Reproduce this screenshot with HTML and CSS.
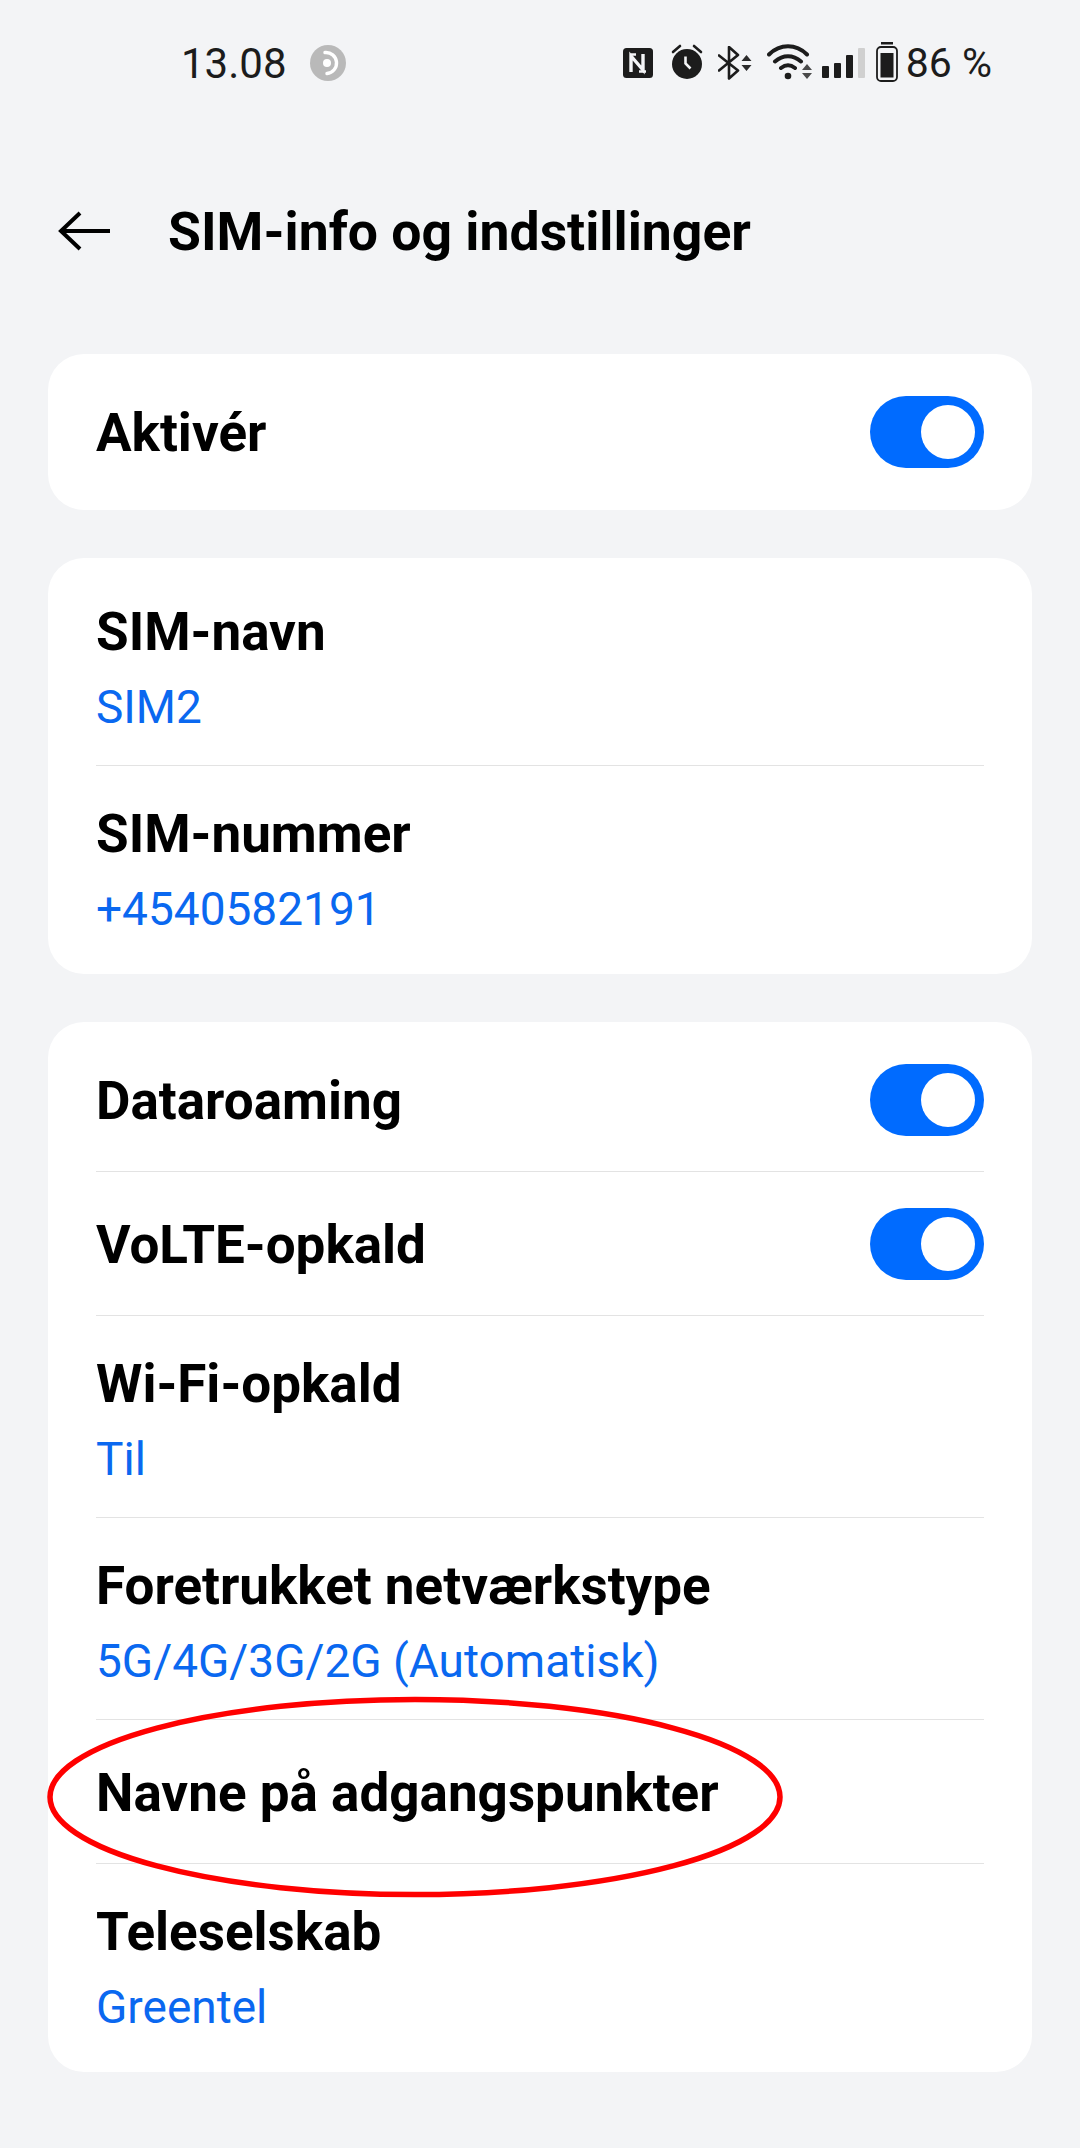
FILE: index.html
```html
<!DOCTYPE html>
<html lang="da">
<head>
    <meta charset="UTF-8">
    <meta name="viewport" content="width=device-width, initial-scale=1.0">
    <title>SIM-info og indstillinger</title>
    <link rel="stylesheet" href="styles.css">
</head>
<body>
    <div class="status-bar">
        <span class="clock">13.08</span>
        <svg class="icon-sync" width="36" height="36" viewBox="0 0 36 36">
            <circle cx="18" cy="18" r="18" fill="#b9b9b9"/>
            <circle cx="17" cy="18" r="4" fill="#fff"/>
            <path d="M15 7.5a10.5 10.5 0 0 1 2 21" fill="none" stroke="#fff" stroke-width="3.4" stroke-linecap="round"/>
        </svg>
        <div class="status-icons">
            <!-- NFC -->
            <svg class="icon-nfc" width="30" height="30" viewBox="0 0 30 30">
                <rect width="30" height="30" rx="3.5" fill="#1c1c1c"/>
                <path d="M8 24V8l12 14V6" fill="none" stroke="#f3f4f6" stroke-width="3.4"/>
                <path d="M8 6.500h5M16 23.500h7" fill="none" stroke="#f3f4f6" stroke-width="2.600"/>
            </svg>
            <!-- alarm -->
            <svg class="icon-alarm" width="32" height="36" viewBox="0 0 32 36">
                <circle cx="16" cy="21" r="15" fill="#1c1c1c"/>
                <path d="M2 9l7-6M30 9l-7-6" stroke="#1c1c1c" stroke-width="2.6" stroke-linecap="round"/>
                <path d="M14.5 13.5v7l5 5" fill="none" stroke="#f3f4f6" stroke-width="2.6"/>
            </svg>
            <!-- bluetooth -->
            <svg class="icon-bt" width="34" height="34" viewBox="0 0 34 34">
                <path d="M1 9.5l19 15-9 8V1l9 8L1 24.500" fill="none" stroke="#1c1c1c" stroke-width="2.6" stroke-linecap="round" stroke-linejoin="round"/>
                <path d="M23.500 15l5-6 5 6zM23.500 19h10l-5 6z" fill="#2b2b2b"/>
            </svg>
            <!-- wifi -->
            <svg class="icon-wifi" width="46" height="36" viewBox="0 0 46 36">
                <path d="M2 10.500c11-11 27-11 38 0M8 17.500c8-7 18-7 26 0M14 24c4.500-3.500 9.500-3.500 14 0" fill="none" stroke="#1c1c1c" stroke-width="4" stroke-linecap="round"/>
                <circle cx="21" cy="32" r="3.300" fill="#1c1c1c"/>
                <path d="M35 26l5-6 5 6zM35 29h10l-5 6z" fill="#4a4a4a"/>
            </svg>
            <!-- signal -->
            <div class="signal">
                <span class="bar bar-1"></span>
                <span class="bar bar-2"></span>
                <span class="bar bar-3"></span>
                <span class="bar bar-4"></span>
            </div>
            <!-- battery -->
            <svg class="icon-battery" width="22" height="40" viewBox="0 0 22 40">
                <rect x="5" y="0" width="12" height="2.500" fill="#1c1c1c"/>
                <rect x="1" y="5" width="20" height="34" rx="4" fill="none" stroke="#1c1c1c" stroke-width="1.800"/>
                <rect x="4.500" y="11" width="13" height="24.500" fill="#1c1c1c"/>
            </svg>
            <span class="battery-text">86 %</span>
        </div>
    </div>

    <div class="header">
        <svg class="back-arrow" width="54" height="40" viewBox="0 0 54 40">
            <path d="M24 2L5 20l19 18M5 20h49" fill="none" stroke="#000" stroke-width="4"/>
        </svg>
        <h1>SIM-info og indstillinger</h1>
    </div>

    <div class="card">
        <div class="row">
            <div class="row-title">Aktivér</div>
            <div class="toggle"><span class="knob"></span></div>
        </div>
    </div>

    <div class="card">
        <div class="row tall">
            <div class="row-text">
                <div class="row-title">SIM-navn</div>
                <div class="row-value">SIM2</div>
            </div>
        </div>
        <div class="row tall">
            <div class="row-text">
                <div class="row-title">SIM-nummer</div>
                <div class="row-value">+4540582191</div>
            </div>
        </div>
    </div>

    <div class="card">
        <div class="row">
            <div class="row-title">Dataroaming</div>
            <div class="toggle"><span class="knob"></span></div>
        </div>
        <div class="row">
            <div class="row-title">VoLTE-opkald</div>
            <div class="toggle"><span class="knob"></span></div>
        </div>
        <div class="row tall">
            <div class="row-text">
                <div class="row-title">Wi-Fi-opkald</div>
                <div class="row-value">Til</div>
            </div>
        </div>
        <div class="row tall">
            <div class="row-text">
                <div class="row-title">Foretrukket netværkstype</div>
                <div class="row-value">5G/4G/3G/2G (Automatisk)</div>
            </div>
        </div>
        <div class="row">
            <div class="row-title">Navne på adgangspunkter</div>
        </div>
        <div class="row tall">
            <div class="row-text">
                <div class="row-title">Teleselskab</div>
                <div class="row-value">Greentel</div>
            </div>
        </div>
    </div>

    <!-- red marker drawn on top of the screenshot -->
    <svg class="marker" width="744" height="206" viewBox="0 0 744 206">
        <ellipse cx="368" cy="102" rx="365" ry="97.500" fill="none" stroke="#f00" stroke-width="5.500"/>
    </svg>
</body>
</html>
```

FILE: styles.css
```css
* {
    box-sizing: border-box;
}

html, body {
    margin: 0;
    padding: 0;
}

body {
    position: relative;
    height: 2148px;
    overflow: hidden;
    padding: 0 48px;
    background-color: #f3f4f6;
    font-family: Roboto, "Liberation Sans", sans-serif;
    color: #000;
}

.status-bar {
    display: flex;
    align-items: center;
    height: 126px;
    margin: 0 -48px;
    padding: 0 88px 0 181px;
    color: #1c1c1c;
    font-size: 42px;
}

.clock {
    width: 129px;
}

.status-icons {
    display: flex;
    align-items: center;
    margin-left: auto;
}

.icon-alarm { margin-left: 18px; margin-top: -4px; }
.icon-bt { margin-left: 15px; }
.icon-wifi { margin-left: 15px; margin-top: -2px; }

.signal {
    display: flex;
    align-items: flex-end;
    gap: 5px;
    height: 30px;
    margin-left: 9px;
}

.bar {
    width: 7px;
    border-radius: 1px;
    background-color: #1c1c1c;
}

.bar-1 { height: 12px; }
.bar-2 { height: 15px; }
.bar-3 { height: 23px; }
.bar-4 { height: 30px; background-color: #d0d0d0; }

.icon-battery { margin-left: 11px; margin-top: -2px; }

.battery-text {
    margin-left: 8px;
    font-size: 41px;
}

.header {
    display: flex;
    align-items: center;
    height: 104px;
    margin-top: 53px;
    margin-bottom: 71px;
}

.back-arrow {
    margin-left: 8px;
    margin-right: 58px;
}

.header h1 {
    margin: 0;
    font-size: 53.500px;
    font-weight: 700;
}

.card {
    margin-bottom: 48px;
    padding: 6px 48px;
    background-color: #fff;
    border-radius: 36px;
}

.row {
    display: flex;
    align-items: center;
    justify-content: space-between;
    height: 144px;
    border-bottom: 1px solid #e3e3e3;
}

.row:last-child {
    border-bottom: none;
}

.row.tall {
    height: 202px;
}

.row-text {
    padding-top: 4px;
}

.row-title {
    padding-top: 2px;
    font-size: 53px;
    font-weight: 700;
    line-height: 56px;
}

.row-value {
    margin-top: 22px;
    font-size: 46px;
    line-height: 50px;
    color: #0a68f0;
}

.toggle {
    display: flex;
    justify-content: flex-end;
    align-items: center;
    width: 114px;
    height: 72px;
    padding-right: 9px;
    border-radius: 36px;
    background-color: #006bff;
}

.knob {
    width: 54px;
    height: 54px;
    border-radius: 50%;
    background-color: #fff;
}

.marker {
    position: absolute;
    left: 47px;
    top: 1695px;
}
```
